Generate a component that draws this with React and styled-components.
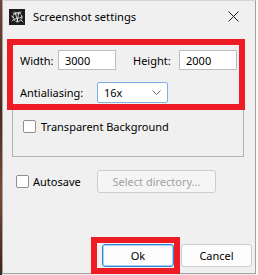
import React from "react";
import styled, { createGlobalStyle } from "styled-components";

const Global = createGlobalStyle`
    html, body {
        margin: 0;
        padding: 0;
        overflow: hidden;
        background: #ececec;
    }
    body {
        font-family: "Noto Sans", "Liberation Sans", sans-serif;
        font-size: 11px;
        color: #000;
    }
`;

const Page = styled.div`
    position: relative;
    width: 258px;
    height: 275px;
    display: flex;
    align-items: flex-start;
`;

const Desktop = styled.div`
    width: ${(p) => p.$w}px;
    height: 275px;
    flex-shrink: 0;
    background: ${(p) => p.$bg};
`;

const Window = styled.div`
    width: 254px;
    height: 274px;
    box-sizing: border-box;
    flex-shrink: 0;
    background: #f0f0f0;
    border: 1px solid #a3a3a3;
    border-top-color: #d6d6d6;
    display: flex;
    flex-direction: column;
`;

const TitleBar = styled.div`
    height: 32px;
    display: flex;
    align-items: center;
    padding-left: 6px;
`;

const Title = styled.span`
    margin-left: 8px;
    font-size: 11.2px;
    flex: 1;
    padding-bottom: 1px;
`;

const CloseButton = styled.div`
    width: 44px;
    height: 30px;
    align-self: flex-start;
    display: flex;
    align-items: center;
    justify-content: center;
`;

const GroupBox = styled.div`
    margin: 9px 11px 0 9px;
    border: 1px solid #b2b2b2;
    padding: 7px 6px 22px 7px;
    display: flex;
    flex-direction: column;
`;

const Row = styled.div`
    display: flex;
    align-items: center;
    margin-top: ${(p) => p.$top || 0}px;
    padding-left: ${(p) => p.$indent || 0}px;
`;

const Label = styled.span`
    width: ${(p) => p.$w}px;
    margin-left: ${(p) => p.$ml || 0}px;
    flex-shrink: 0;
    white-space: nowrap;
`;

const TextBox = styled.div`
    width: 58px;
    height: 20px;
    box-sizing: border-box;
    border: 1px solid #bdbdbd;
    background: #fff;
    padding-left: 6px;
    display: flex;
    align-items: center;
`;

const Select = styled.div`
    width: 71px;
    height: 21px;
    box-sizing: border-box;
    border: 1px solid #7fb0e4;
    border-radius: 2px;
    background: #fff;
    padding: 0 6px 0 6px;
    display: flex;
    align-items: center;
    justify-content: space-between;
`;

const CheckBox = styled.div`
    width: 13px;
    height: 13px;
    box-sizing: border-box;
    border: 1px solid #8f8f8f;
    border-radius: 2px;
    background: #fff;
    flex-shrink: 0;
    margin-right: ${(p) => p.$gap}px;
`;

const Button = styled.div`
    width: ${(p) => p.$w}px;
    height: 23px;
    box-sizing: border-box;
    border: 1px solid ${(p) => (p.$primary ? "#2f87dc" : "#cdcdcd")};
    box-shadow: ${(p) => (p.$primary ? "inset 0 0 0 1px #a9cff3" : "none")};
    border-radius: 3px;
    background: ${(p) => (p.$disabled ? "#f5f5f5" : "#fdfdfd")};
    color: ${(p) => (p.$disabled ? "#a2a2a2" : "#000")};
    display: flex;
    align-items: center;
    justify-content: center;
    flex-shrink: 0;
`;

const Footer = styled.div`
    margin-top: auto;
    padding: 0 3px 6px 0;
    display: flex;
    justify-content: flex-end;
    gap: 7px;
`;

const Highlight = styled.div`
    position: absolute;
    left: ${(p) => p.$x}px;
    top: ${(p) => p.$y}px;
    width: ${(p) => p.$w}px;
    height: ${(p) => p.$h}px;
    box-sizing: border-box;
    border: 6px solid #ed1c24;
    pointer-events: none;
`;

const AppIcon = () => (
    <svg width="16" height="16" viewBox="0 0 16 16">
        <rect width="16" height="16" fill="#1c1c1c" />
        <g fill="none" stroke="#f2f2f2" strokeWidth="0.8" strokeLinecap="round">
            <circle cx="8.5" cy="8" r="4.5" strokeDasharray="2 1.2" />
            <path d="M4 4 C6 6, 9 5, 12 3" />
            <path d="M3 12 C5 9, 9 10, 13 8" />
            <path d="M6 3 L9 13" />
            <path d="M10 3 L8 13" />
            <path d="M2.5 7 L5 9" />
            <path d="M12 11 L14 13" />
        </g>
    </svg>
);

const CloseIcon = () => (
    <svg width="11" height="11" viewBox="0 0 11 11">
        <path d="M0.5 0.5 L10.5 10.5 M10.5 0.5 L0.5 10.5" stroke="#1a1a1a" strokeWidth="1" />
    </svg>
);

const Chevron = () => (
    <svg width="9" height="5" viewBox="0 0 9 5">
        <path d="M0.5 0.5 L4.5 4.5 L8.5 0.5" fill="none" stroke="#6a6a6a" strokeWidth="1" />
    </svg>
);

const App = () => {
    return (
        <Page>
            <Global />
            <Desktop $w={2} $bg="linear-gradient(180deg, #6e4432 0%, #4a2a1e 40%, #7a4b34 70%, #3f2419 100%)" />
            <Window>
                <TitleBar>
                    <AppIcon />
                    <Title>Screenshot settings</Title>
                    <CloseButton>
                        <CloseIcon />
                    </CloseButton>
                </TitleBar>
                <GroupBox>
                    <Row>
                        <Label $w={38}>Width:</Label>
                        <TextBox>3000</TextBox>
                        <Label $w={46} $ml={17}>Height:</Label>
                        <TextBox>2000</TextBox>
                    </Row>
                    <Row $top={12}>
                        <Label $w={77}>Antialiasing:</Label>
                        <Select>
                            <span>16x</span>
                            <Chevron />
                        </Select>
                    </Row>
                    <Row $top={16} $indent={3}>
                        <CheckBox $gap={5} />
                        <span>Transparent Background</span>
                    </Row>
                </GroupBox>
                <Row $top={13} $indent={13}>
                    <CheckBox $gap={4} />
                    <Label $w={64}>Autosave</Label>
                    <Button $w={119} $disabled>Select directory...</Button>
                </Row>
                <Footer>
                    <Button $w={72} $primary>Ok</Button>
                    <Button $w={71}>Cancel</Button>
                </Footer>
            </Window>
            <Desktop $w={2} $bg="#fafafa" />
            <Highlight $x={7} $y={39} $w={238} $h={71} />
            <Highlight $x={91} $y={237} $w={89} $h={37} />
        </Page>
    );
};

export default App;
